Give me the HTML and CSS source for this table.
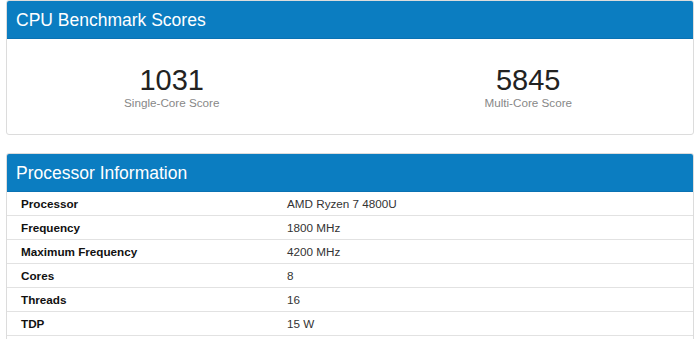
FILE: index.html
```html
<!DOCTYPE html>
<html lang="en">
<head>
<meta charset="utf-8">
<title>CPU Benchmark Scores</title>
<link rel="stylesheet" href="styles.css">
</head>
<body>
<main class="page">
  <section class="card">
    <h2 class="card-header">CPU Benchmark Scores</h2>
    <div class="scores">
      <div class="score">
        <div class="score-value">1031</div>
        <div class="score-label">Single-Core Score</div>
      </div>
      <div class="score">
        <div class="score-value">5845</div>
        <div class="score-label">Multi-Core Score</div>
      </div>
    </div>
  </section>
  <section class="card">
    <h2 class="card-header">Processor Information</h2>
    <div class="info">
      <div class="info-row"><div class="info-name">Processor</div><div class="info-value">AMD Ryzen 7 4800U</div></div>
      <div class="info-row"><div class="info-name">Frequency</div><div class="info-value">1800 MHz</div></div>
      <div class="info-row"><div class="info-name">Maximum Frequency</div><div class="info-value">4200 MHz</div></div>
      <div class="info-row"><div class="info-name">Cores</div><div class="info-value">8</div></div>
      <div class="info-row"><div class="info-name">Threads</div><div class="info-value">16</div></div>
      <div class="info-row"><div class="info-name">TDP</div><div class="info-value">15 W</div></div>
    </div>
  </section>
</main>
</body>
</html>
```
FILE: styles.css
```css
html, body {
  margin: 0;
  padding: 0;
  background: #ffffff;
}

body {
  font-family: "Liberation Sans", Arial, sans-serif;
  color: #222222;
}

.page {
  display: flex;
  flex-direction: column;
  gap: 18px;
  padding: 0 6px;
}

.card {
  border: 1px solid #dcdcdc;
  border-radius: 3px;
  background: #ffffff;
  overflow: hidden;
}

.card-header {
  margin: 0;
  background: #0b7dc1;
  color: #ffffff;
  font-weight: normal;
  font-size: 17.5px;
  line-height: 20px;
  padding: 9px 9px 8px;
  border-bottom: 1px solid #0a72b3;
}

.scores {
  display: grid;
  grid-template-columns: 1fr 1fr;
  column-gap: 27px;
  padding: 25px 0 24px;
  text-align: center;
}

.score-value {
  font-size: 29px;
  line-height: 32px;
  color: #222222;
}

.score-label {
  font-size: 11.7px;
  line-height: 14px;
  color: #888888;
}

.info {
  padding-bottom: 12px;
}

.info-row {
  display: grid;
  grid-template-columns: 266px 1fr;
  border-bottom: 1px solid #e2e2e2;
  font-size: 11.7px;
  line-height: 16px;
  padding: 4px 0 3px;
}

.info-name {
  padding: 0 14px;
  font-weight: bold;
  color: #111111;
}

.info-value {
  padding: 0 14px;
  color: #333333;
}
```
